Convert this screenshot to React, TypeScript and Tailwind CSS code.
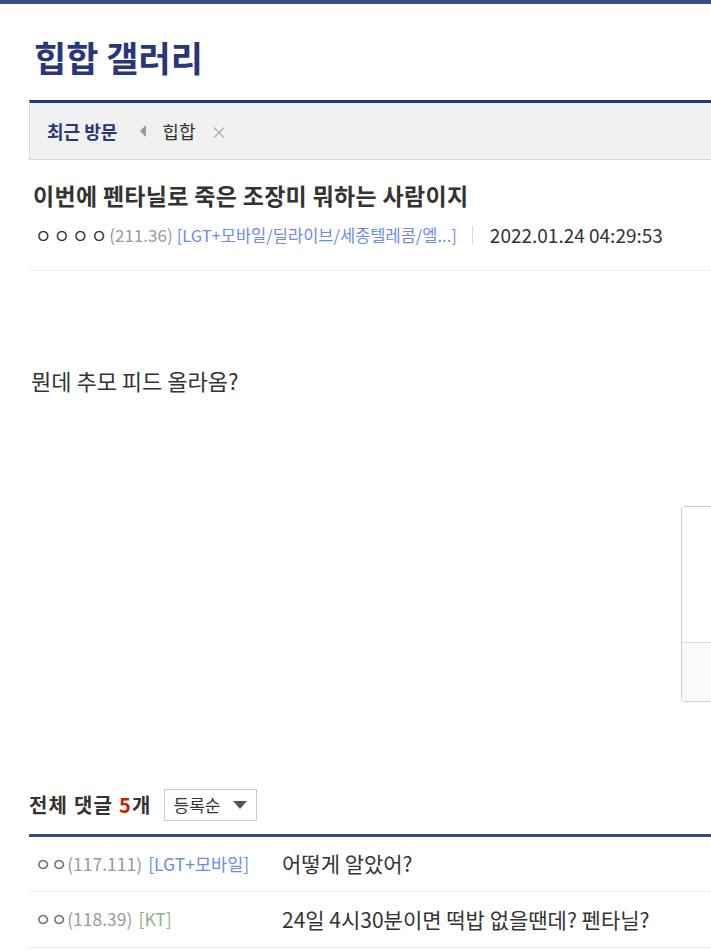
import React from "react";

const F = { fontFamily: '"Noto Sans CJK KR", "Noto Sans", sans-serif' };

export default function App() {
  return (
    <div className="w-[711px] h-[950px] overflow-hidden bg-white text-[#333]" style={F}>
      <div className="h-[4px] bg-[#3b4890]" />
      {/* gallery title */}
      <div className="h-[96px] pl-[34px] pt-[33px]">
        <h1 className="text-[35px] leading-[40px] font-bold text-[#29367c]">힙합 갤러리</h1>
      </div>
      {/* recent visit bar */}
      <div className="ml-[29px] w-[900px] h-[60px] border-t-[3px] border-t-[#29367c] border-l border-b border-l-[#d6d6d6] border-b-[#d6d6d6] bg-[#f1f1f1] flex items-center pl-[17px]">
        <span className="text-[18px] font-bold text-[#29367c]">최근 방문</span>
        <span className="ml-[23px] w-0 h-0 border-y-[6px] border-y-transparent border-r-[6px] border-r-[#999]" />
        <span className="ml-[16px] text-[18px] text-[#333]">힙합</span>
        <span className="ml-[15px] text-[17px] text-[#aaa] leading-none">×</span>
      </div>
      {/* post header */}
      <div className="ml-[29px] w-[900px] h-[111px] border-b border-[#eee]">
        <h2 className="pl-[4px] pt-[20px] text-[23px] leading-[30px] font-bold text-[#333] tracking-[0.3px]">이번에 펜타닐로 죽은 조장미 뭐하는 사람이지</h2>
        <div className="pl-[6px] mt-[13px] flex items-center leading-[24px]">
          <span className="text-[18px] text-[#333] tracking-[2px]">ㅇㅇㅇㅇ</span>
          <span className="text-[#999] text-[17px]">(211.36)</span>
          <span className="ml-[4px] text-[#6e8be6] text-[16.5px]">[LGT+모바일/딜라이브/세종텔레콤/엘...]</span>
          <span className="ml-[15px] w-px h-[18px] bg-[#ddd]" />
          <span className="ml-[17px] text-[19px] text-[#333]">2022.01.24 04:29:53</span>
        </div>
      </div>
      {/* body */}
      <div className="ml-[29px] w-[900px] h-[499px]">
        <p className="pl-[2px] pt-[94px] text-[22px] leading-[30px] text-[#333]">뭔데 추모 피드 올라옴?</p>
        <div className="ml-[652px] mt-[111px] w-[200px] h-[196px] rounded-[4px] border border-[#ccc] flex flex-col overflow-hidden">
          <div className="h-[136px] bg-white border-b border-[#ddd]" />
          <div className="flex-1 bg-[#f9f9f9]" />
        </div>
      </div>
      {/* comments */}
      <div className="ml-[29px] w-[900px]">
        <div className="flex items-center h-[67px] pt-[6px] border-b-[3px] border-[#3b4890]">
          <span className="text-[20px] font-bold text-[#333] tracking-[1.2px]">전체 댓글 <span className="text-[#d31900]">5</span>개</span>
          <div className="ml-[12px] w-[93px] h-[32px] border border-[#ccc] flex items-center pl-[9px]">
            <span className="text-[17px] text-[#333]">등록순</span>
            <span className="ml-[13px] w-0 h-0 border-x-[7px] border-x-transparent border-t-[8px] border-t-[#555]" />
          </div>
        </div>
        <div className="flex items-center h-[55px] border-b border-[#eee]">
          <div className="w-[253px] pl-[6px] text-[17.5px]">
            <span className="text-[#666]">ㅇㅇ</span>
            <span className="text-[#999]">(117.111)</span>
            <span className="ml-[6px] text-[#6e8be6]">[LGT+모바일]</span>
          </div>
          <span className="text-[21px] text-[#333]">어떻게 알았어?</span>
        </div>
        <div className="flex items-center h-[56px] border-b border-[#eee]">
          <div className="w-[253px] pl-[6px] text-[17.5px]">
            <span className="text-[#666]">ㅇㅇ</span>
            <span className="text-[#999]">(118.39)</span>
            <span className="ml-[6px] text-[#8fb47a]">[KT]</span>
          </div>
          <span className="text-[21px] text-[#333]">24일 4시30분이면 떡밥 없을땐데? 펜타닐?</span>
        </div>
      </div>
    </div>
  );
}
